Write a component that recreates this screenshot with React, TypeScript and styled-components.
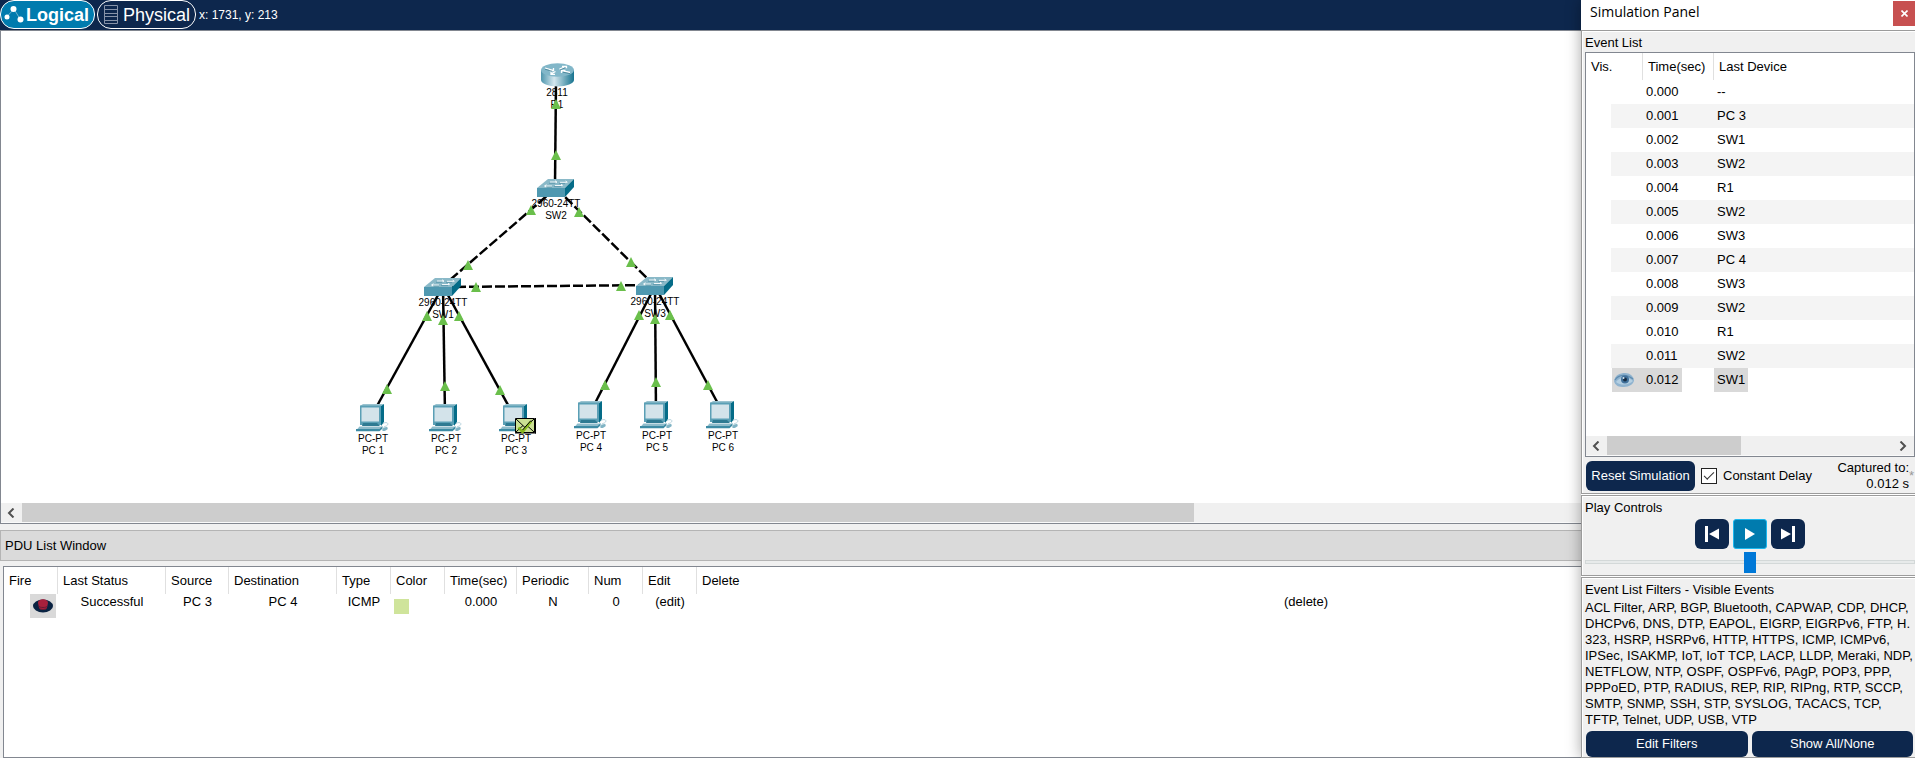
import React from 'react';
import styled, { createGlobalStyle, css } from 'styled-components';

const NAVY = '#0d274d';
const LINE = '#828790';

const GlobalStyle = createGlobalStyle`
  *, *::before, *::after { box-sizing: border-box; }
  body {
    margin: 0;
    background: #f0f0f0;
    color: #000;
    font: 13px/16px "Liberation Sans", Arial, sans-serif;
  }
  button, input { font: inherit; }
  table { border-collapse: separate; border-spacing: 0; }
`;

const Page = styled.div`
  display: grid;
  grid-template-columns: minmax(0, 1fr) 334px;
  min-height: 100vh;
`;

const MainColumn = styled.main`
  display: flex;
  flex-direction: column;
  min-width: 0;
  overflow: hidden;
`;

/* ---------- top bar ---------- */

const TopBar = styled.nav`
  display: flex;
  align-items: flex-start;
  height: 30px;
  background: ${NAVY};
  color: #fff;
`;

const ViewTab = styled.button<{ $active?: boolean; $width: number }>`
  display: flex;
  align-items: center;
  gap: 2px;
  width: ${(p) => p.$width}px;
  height: 29px;
  margin-right: 2px;
  padding: 0 3px;
  border: 1px solid #fff;
  border-radius: 14px;
  background: ${(p) => (p.$active ? '#007bae' : NAVY)};
  color: #fff;
  font-size: 18px;
  line-height: 20px;
  font-weight: ${(p) => (p.$active ? 700 : 400)};
`;

const TabIcon = styled.span`
  display: flex;
  padding: 0 3px;
`;

const Coordinates = styled.span`
  padding-left: 1px;
  font-size: 12px;
  line-height: 30px;
`;

/* ---------- workspace ---------- */

const Workspace = styled.section`
  display: flex;
  flex: 1;
  flex-direction: column;
  border: solid ${LINE};
  border-width: 1px 0 1px 1px;
  background: #fff;
`;

const Topology = styled.svg`
  display: block;
  flex: 1;
  width: 100%;
  min-height: 440px;
  font-size: 10px;
  text-anchor: middle;
`;

const ScrollBar = styled.div`
  display: flex;
  height: 20px;
  border-bottom: 1px solid #fafafa;
  background: #f0f0f0;
`;

const ScrollArrow = styled.button`
  display: grid;
  place-items: center;
  width: 21px;
  padding: 0 2px 0 0;
  border: 0;
  background: none;
`;

const ScrollTrack = styled.div`
  flex: 1;
`;

const ScrollThumb = styled.div<{ $share: string }>`
  width: ${(p) => p.$share};
  height: 100%;
  background: #cdcdcd;
`;

/* ---------- PDU list ---------- */

const DockTitle = styled.h2`
  margin: 6px 0 5px;
  padding: 1px 4px 0;
  border: 1px solid #b4b4b4;
  border-right: 0;
  background: #dadada;
  font-size: 13px;
  font-weight: 400;
  line-height: 28px;
`;

const PduBox = styled.section`
  height: 192px;
  margin-left: 3px;
  border: solid ${LINE};
  border-width: 1px 0 1px 1px;
  background: #fff;
  overflow: hidden;
`;

const headCell = css`
  height: 27px;
  padding: 1px 5px 0;
  border-right: 1px solid #e0e0e0;
  font-weight: 400;
  text-align: left;
  white-space: nowrap;
  &:last-child { border-right: 0; }
`;

/* The last column continues underneath the docked panel. */
const PduTable = styled.table`
  width: calc(100% + 334px);
  table-layout: fixed;
  th { ${headCell} }
  td {
    height: 24px;
    padding: 0;
    text-align: center;
    vertical-align: top;
  }
`;

const FireButton = styled.button`
  display: grid;
  place-items: center;
  width: 26px;
  height: 24px;
  margin-left: auto;
  margin-right: 2px;
  padding: 0;
  border: 0;
  background: #d9d9d9;
`;

const Swatch = styled.div`
  width: 15px;
  height: 15px;
  margin: 5px 3px 0;
  background: #cfe49b;
`;

const CellButton = styled.button`
  padding: 0;
  border: 0;
  background: none;
  color: inherit;
  line-height: 16px;
`;

/* ---------- simulation panel ---------- */

const Panel = styled.aside`
  display: flex;
  flex-direction: column;
  position: relative;
  min-width: 0;
  background: #f0f0f0;
  box-shadow: 0 0 14px rgba(0, 0, 0, 0.35);
`;

const PanelTitle = styled.header`
  display: flex;
  justify-content: space-between;
  height: 30px;
  padding: 1px 0 0 9px;
  background: #fff;
  font: 14px/22px "Open Sans", "Noto Sans", sans-serif;
`;

const CloseButton = styled.button`
  display: grid;
  place-items: center;
  width: 22px;
  height: 25px;
  padding: 0;
  border: 0;
  background: #c75050;
`;

const Group = styled.section<{ $height?: number }>`
  display: flex;
  flex-direction: column;
  flex: ${(p) => (p.$height ? `0 0 ${p.$height}px` : '1')};
  padding: 3px 0 0 3px;
  border: solid #9b9b9b;
  border-width: 1px 0 1px 1px;
  margin-bottom: ${(p) => (p.$height ? 1 : 0)}px;
  box-shadow: inset 1px 1px #fff, 0 1px #fff;
`;

const GroupTitle = styled.h3`
  margin: 0;
  font-size: 13px;
  font-weight: 400;
  line-height: 18px;
`;

const EventBox = styled.div`
  display: flex;
  flex: 1;
  flex-direction: column;
  border: 1px solid ${LINE};
  background: #fff;
`;

const EventRows = styled.div`
  flex: 1;
`;

const EventTable = styled.table`
  width: 100%;
  table-layout: fixed;
  th { ${headCell} }
  td { height: 24px; padding: 0; }
  tbody tr:nth-child(even) td { background: #f4f4f4; }
  tbody tr:nth-child(even) td:first-child {
    background: linear-gradient(to right, #fff 25px, #f4f4f4 25px);
  }
`;

const EventCell = styled.span<{ $selected: boolean }>`
  display: inline-block;
  padding: 0 3px;
  line-height: 24px;
  vertical-align: top;
  background: ${(p) => (p.$selected ? '#d9d9d9' : 'none')};
`;

const VisibleMark = styled.div`
  display: flex;
  align-items: center;
  height: 24px;
  margin-left: 26px;
  padding-left: 2px;
  background: #d9d9d9;
`;

const ResetRow = styled.div`
  display: flex;
  align-items: center;
  height: 36px;
  padding: 1px 0 0 1px;
`;

const DarkButton = styled.button<{ $width?: number; $height: number }>`
  display: grid;
  place-items: center;
  flex: ${(p) => (p.$width ? `0 0 ${p.$width}px` : '1')};
  height: ${(p) => p.$height}px;
  padding: 0;
  border: 0;
  border-radius: 6px;
  background: ${NAVY};
  color: #fff;
`;

const DelayLabel = styled.label`
  display: flex;
  align-items: center;
  gap: 6px;
  margin-left: 6px;
`;

const CheckBox = styled.input`
  display: grid;
  place-items: center;
  appearance: none;
  width: 16px;
  height: 16px;
  margin: 0;
  border: 1px solid #222;
  background: #fff;
  &:checked::before {
    content: "";
    width: 10px;
    height: 5px;
    margin-bottom: 3px;
    border: solid #333;
    border-width: 0 0 1px 1px;
    transform: rotate(-45deg);
  }
`;

const Captured = styled.output`
  margin-left: auto;
  text-align: right;
`;

const Asterisk = styled.span`
  width: 6px;
  color: #999;
`;

const PlayRow = styled.div`
  display: flex;
  justify-content: center;
  gap: 4px;
  margin-top: 2px;
`;

const PlayButton = styled(DarkButton)<{ $active?: boolean }>`
  ${(p) =>
    p.$active &&
    css`
      border: 1px solid #1cb8ee;
      border-radius: 3px;
      background: #007bae;
    `}
`;

const SpeedSlider = styled.input`
  appearance: none;
  width: 100%;
  height: 21px;
  margin: 2px 0 0;
  background: none;
  &::-webkit-slider-runnable-track {
    height: 4px;
    border: 1px solid #d3d8d8;
    background: #e7eaea;
  }
  &::-webkit-slider-thumb {
    appearance: none;
    width: 12px;
    height: 21px;
    margin-top: -9px;
    background: #0078d7;
  }
`;

const FilterText = styled.p`
  margin: 1px 0 3px;
`;

const FilterButtons = styled.div`
  display: flex;
  gap: 4px;
  padding: 0 2px 0 1px;
  margin-top: auto;
`;

/* ---------- data ---------- */

type Point = [number, number];

const links: { from: Point; to: Point; dashed?: boolean }[] = [
  { from: [556, 80], to: [555, 185] },
  { from: [556, 188], to: [443, 286], dashed: true },
  { from: [556, 188], to: [655, 286], dashed: true },
  { from: [443, 287], to: [655, 285], dashed: true },
  { from: [443, 286], to: [372, 415] },
  { from: [443, 286], to: [445, 415] },
  { from: [443, 286], to: [514, 416] },
  { from: [655, 286], to: [590, 413] },
  { from: [655, 286], to: [656, 413] },
  { from: [655, 286], to: [723, 413] },
];

const ports: Point[] = [
  [556, 99], [556, 150], [531, 205], [579, 207], [468, 260], [476, 282],
  [631, 257], [621, 281], [427, 311], [443, 315], [459, 311], [639, 310],
  [655, 314], [670, 310], [387, 384], [445, 381], [500, 385], [605, 380],
  [656, 377], [708, 380],
];

type Device = { kind: 'router' | 'switch' | 'pc'; x: number; y: number; model: string; name: string };

const devices: Device[] = [
  { kind: 'router', x: 541, y: 63, model: '2811', name: 'R1' },
  { kind: 'switch', x: 537, y: 179, model: '2960-24TT', name: 'SW2' },
  { kind: 'switch', x: 424, y: 278, model: '2960-24TT', name: 'SW1' },
  { kind: 'switch', x: 636, y: 277, model: '2960-24TT', name: 'SW3' },
  { kind: 'pc', x: 356, y: 404, model: 'PC-PT', name: 'PC 1' },
  { kind: 'pc', x: 429, y: 404, model: 'PC-PT', name: 'PC 2' },
  { kind: 'pc', x: 499, y: 404, model: 'PC-PT', name: 'PC 3' },
  { kind: 'pc', x: 574, y: 401, model: 'PC-PT', name: 'PC 4' },
  { kind: 'pc', x: 640, y: 401, model: 'PC-PT', name: 'PC 5' },
  { kind: 'pc', x: 706, y: 401, model: 'PC-PT', name: 'PC 6' },
];

const labelAt = { router: [16, 33], switch: [19, 28], pc: [17, 38] };

const pduColumns: [string, number | undefined][] = [
  ['Fire', 54], ['Last Status', 108], ['Source', 63], ['Destination', 108],
  ['Type', 54], ['Color', 54], ['Time(sec)', 72], ['Periodic', 72],
  ['Num', 54], ['Edit', 54], ['Delete', undefined],
];

const eventDevices = ['--', 'PC 3', 'SW1', 'SW2', 'R1', 'SW2', 'SW3', 'PC 4', 'SW3', 'SW2', 'R1', 'SW2', 'SW1'];
const events = eventDevices.map((device, i) => ({ time: (i / 1000).toFixed(3), device }));

/* ---------- drawings ---------- */

const RouterIcon = () => (
  <g>
    <path d="M0 7v10c0 3.500 7.400 6.500 16.500 6.500S33 20.500 33 17V7z" fill="url(#routerSide)" />
    <ellipse cx="16.500" cy="7" rx="16.500" ry="6.800" fill="#82b7c9" />
    <g stroke="#fff" strokeWidth="1.300" fill="none">
      <path d="M4 5l8 2.300M12.500 5v2.500H8.500M29 9.500l-8-1.800M20.500 10V7.500h4" />
      <path d="M18.500 6.200l6-2.700M21 3.300h4.500v2M14.500 8.500l-4.500 2.300M10 8.800v2.500h4" />
    </g>
    <path d="M4 6.200l7 2M19 7l5-2.200M22 9.200l7 1.400" stroke="#3a768a" strokeWidth="0.700" />
  </g>
);

const SwitchIcon = () => (
  <g>
    <path d="M0 9L11 0h26L28 9z" fill="#8ab9c8" />
    <path d="M0 9h28v9H0z" fill="#4f98b0" />
    <path d="M28 9l9-9v8l-9 10z" fill="#056c88" />
    <g stroke="#fff" strokeWidth="0.900" fill="none">
      <path d="M13 3h6M18 1.800l2 1.200-2 1.400M23 3.300h7M28.500 2l2 1.300M8 7h7M9.500 5.700L7.500 7l2 1.200M18 6.500h7M24 5.200l2 1.300" />
    </g>
    <path d="M12 4.300h7M22 4.600h6M9 8.200h6M17 7.600h7" stroke="#45889d" strokeWidth="0.600" />
  </g>
);

const PcIcon = () => (
  <g>
    <path d="M4 2l3-2h21l-3 2z" fill="#9ac3d0" />
    <path d="M25 2l3-2v18l-3 4z" fill="#056c88" />
    <path d="M4 1.500h21V21H4z" fill="#5a9fb5" />
    <path d="M5.500 3.500h17.500v14H5.500z" fill="#d3e3ea" />
    <path d="M7 19h14l3 3H6z" fill="#2f7a92" />
    <path d="M3.500 22.500H26l-2.500 4H0z" fill="#8fbccb" />
    <path d="M0 25h23.500l3-3v2.500l-3 2.700H0z" fill="#3d8ba4" />
    <path d="M27 19.500c3-2 6-.5 4.500 1.500s-3.500 1-4 2.500" fill="none" stroke="#b8d4de" />
    <ellipse cx="29" cy="25" rx="3" ry="1.700" fill="#7fb3c4" transform="rotate(-25 29 25)" />
  </g>
);

const Envelope = () => (
  <g transform="translate(515 418)">
    <path d="M.5.5h19v14H.5z" fill="#cbe094" stroke="#000" />
    <path d="M20.500 0v15.500M0 15h21" stroke="#000" />
    <path d="M1 1l9 8.500L19 1M1 14l7-6.500M19 14l-7-6.500" fill="none" stroke="#000" />
    <path d="M3.500 9.500l4 4.500L16 3.500" fill="none" stroke="#86b81c" strokeWidth="2.500" />
    <path d="M7.500 12L16 2.500" stroke="#000" />
  </g>
);

const icons = { router: RouterIcon, switch: SwitchIcon, pc: PcIcon };

const TopologyDrawing = () => (
  <Topology role="img" aria-label="Network topology">
    <defs>
      <linearGradient id="routerSide">
        <stop offset="0" stopColor="#4e96ad" />
        <stop offset="0.4" stopColor="#d5e7ee" />
        <stop offset="1" stopColor="#16738f" />
      </linearGradient>
    </defs>
    <g transform="translate(-1 -31)">
      {links.map(({ from, to, dashed }, i) => (
        <line
          key={i}
          x1={from[0]}
          y1={from[1]}
          x2={to[0]}
          y2={to[1]}
          stroke="#000"
          strokeWidth="2.500"
          strokeDasharray={dashed ? '10 3' : undefined}
        />
      ))}
      {devices.map((d) => {
        const Icon = icons[d.kind];
        const [dx, dy] = labelAt[d.kind];
        return (
          <g key={d.name} transform={`translate(${d.x} ${d.y})`}>
            <Icon />
            <text x={dx} y={dy}>{d.model}</text>
            <text x={dx} y={dy + 12}>{d.name}</text>
          </g>
        );
      })}
      {ports.map(([x, y], i) => (
        <path key={i} d={`M${x} ${y}l5 10h-10z`} fill="#6abf4b" />
      ))}
      <Envelope />
    </g>
  </Topology>
);

const Chevron = ({ right }: { right?: boolean }) => (
  <svg width="8" height="10" viewBox="0 0 8 10" fill="none" stroke="#505050" strokeWidth="2">
    <path d={right ? 'M1.500 .5L6 5l-4.500 4.500' : 'M6.500 .5L2 5l4.500 4.500'} />
  </svg>
);

const LogicalIcon = () => (
  <svg width="20" height="18" viewBox="0 0 20 18" fill="#fff">
    <path d="M3 10.500L10 3l6 10" stroke="#6db4d0" fill="none" />
    <circle cx="3" cy="11" r="2.500" />
    <circle cx="9.500" cy="3" r="3" />
    <circle cx="16.500" cy="13.500" r="3" />
  </svg>
);

const PhysicalIcon = () => (
  <svg width="14" height="20" viewBox="0 0 14 20" fill="none" stroke="#8793a8">
    <path d="M.5.5h13v18H.5zM0 4.500h14M0 8.500h14M0 11.500h14M0 15.500h14" />
  </svg>
);

const FireIcon = () => (
  <svg width="20" height="14" viewBox="0 0 20 14">
    <ellipse cx="10" cy="7" rx="10" ry="6.500" fill="#0a2342" />
    <path d="M5 4c0-5 10-5 10 0l-1 4.500c0 3-8 3-8 0z" fill="#a8203c" />
    <path d="M5.500 7c1 2 8 2 9 0M6 9c1 2 7 2 8 0" stroke="#651a34" fill="none" />
  </svg>
);

const EyeIcon = () => (
  <svg width="20" height="14" viewBox="0 0 20 14">
    <path d="M0 8C1 2 6 0 11 0s8 3 9 7c0 4-5 7-10 7S1 13 0 8z" fill="#8fb3cf" />
    <path d="M2 9c3-5 12-6 17-1-4 4-12 5-17 1z" fill="#b4cfe2" />
    <path d="M1 7C5 1 13 1 19 6" stroke="#5f8cb0" strokeWidth="1.300" fill="none" />
    <circle cx="11" cy="6.500" r="4" fill="#40709a" />
    <circle cx="11" cy="6.500" r="2" fill="#152c44" />
    <circle cx="9.500" cy="5" r="1" fill="#d6e6f0" />
  </svg>
);

const StepIcon = ({ forward }: { forward?: boolean }) => (
  <svg width="16" height="18" viewBox="0 0 16 18" fill="#fff">
    <path d={forward ? 'M1 3.500v11L11 9zM12 1h3v16h-3z' : 'M15 3.500v11L5 9zM1 1h3v16H1z'} />
  </svg>
);

const PlayIcon = () => (
  <svg width="10" height="12" viewBox="0 0 10 12" fill="#fff">
    <path d="M0 0v12l10-6z" />
  </svg>
);

const CloseIcon = () => (
  <svg width="7" height="7" viewBox="0 0 7 7" stroke="#fff" strokeWidth="1.600">
    <path d="M.5.500l6 6M6.500.500l-6 6" />
  </svg>
);

/* ---------- page ---------- */

export default function App() {
  return (
    <Page>
      <GlobalStyle />
      <MainColumn>
        <TopBar>
          <ViewTab $active $width={95}><LogicalIcon />Logical</ViewTab>
          <ViewTab $width={99}>
            <TabIcon><PhysicalIcon /></TabIcon>Physical
          </ViewTab>
          <Coordinates>x: 1731, y: 213</Coordinates>
        </TopBar>
        <Workspace>
          <TopologyDrawing />
          <ScrollBar>
            <ScrollArrow aria-label="Scroll left"><Chevron /></ScrollArrow>
            <ScrollTrack><ScrollThumb $share="75.2%" /></ScrollTrack>
          </ScrollBar>
        </Workspace>
        <DockTitle>PDU List Window</DockTitle>
        <PduBox>
          <PduTable>
            <colgroup>
              {pduColumns.map(([label, width]) => <col key={label} width={width} />)}
            </colgroup>
            <thead>
              <tr>{pduColumns.map(([label]) => <th key={label}>{label}</th>)}</tr>
            </thead>
            <tbody>
              <tr>
                <td><FireButton aria-label="Fire"><FireIcon /></FireButton></td>
                <td>Successful</td>
                <td>PC 3</td>
                <td>PC 4</td>
                <td>ICMP</td>
                <td><Swatch /></td>
                <td>0.000</td>
                <td>N</td>
                <td>0</td>
                <td><CellButton>(edit)</CellButton></td>
                <td><CellButton>(delete)</CellButton></td>
              </tr>
            </tbody>
          </PduTable>
        </PduBox>
      </MainColumn>

      <Panel>
        <PanelTitle>
          Simulation Panel
          <CloseButton aria-label="Close"><CloseIcon /></CloseButton>
        </PanelTitle>
        <Group $height={464}>
          <GroupTitle>Event List</GroupTitle>
          <EventBox>
            <EventRows>
              <EventTable>
                <colgroup><col width={57} /><col width={71} /><col /></colgroup>
                <thead>
                  <tr><th>Vis.</th><th>Time(sec)</th><th>Last Device</th></tr>
                </thead>
                <tbody>
                  {events.map(({ time, device }, i) => {
                    const selected = i === events.length - 1;
                    return (
                      <tr key={time}>
                        <td>{selected && <VisibleMark><EyeIcon /></VisibleMark>}</td>
                        <td><EventCell $selected={selected}>{time}</EventCell></td>
                        <td><EventCell $selected={selected}>{device}</EventCell></td>
                      </tr>
                    );
                  })}
                </tbody>
              </EventTable>
            </EventRows>
            <ScrollBar>
              <ScrollArrow aria-label="Scroll left"><Chevron /></ScrollArrow>
              <ScrollTrack><ScrollThumb $share="47%" /></ScrollTrack>
              <ScrollArrow aria-label="Scroll right"><Chevron right /></ScrollArrow>
            </ScrollBar>
          </EventBox>
          <ResetRow>
            <DarkButton $width={109} $height={30}>Reset Simulation</DarkButton>
            <DelayLabel>
              <CheckBox type="checkbox" defaultChecked />
              Constant Delay
            </DelayLabel>
            <Captured>Captured to:<br />0.012 s</Captured>
            <Asterisk>*</Asterisk>
          </ResetRow>
        </Group>
        <Group $height={81}>
          <GroupTitle>Play Controls</GroupTitle>
          <PlayRow>
            <PlayButton $width={34} $height={30} aria-label="Step back"><StepIcon /></PlayButton>
            <PlayButton $active $width={34} $height={30} aria-label="Play"><PlayIcon /></PlayButton>
            <PlayButton $width={34} $height={30} aria-label="Step forward"><StepIcon forward /></PlayButton>
          </PlayRow>
          <SpeedSlider type="range" defaultValue={50} aria-label="Play speed" />
        </Group>
        <Group>
          <GroupTitle>Event List Filters - Visible Events</GroupTitle>
          <FilterText>
            ACL Filter, ARP, BGP, Bluetooth, CAPWAP, CDP, DHCP, DHCPv6, DNS, DTP, EAPOL,
            EIGRP, EIGRPv6, FTP, H.<wbr />323, HSRP, HSRPv6, HTTP, HTTPS, ICMP, ICMPv6,
            IPSec, ISAKMP, IoT, IoT TCP, LACP, LLDP, Meraki, NDP, NETFLOW, NTP, OSPF,
            OSPFv6, PAgP, POP3, PPP, PPPoED, PTP, RADIUS, REP, RIP, RIPng, RTP, SCCP,
            SMTP, SNMP, SSH, STP, SYSLOG, TACACS, TCP, TFTP, Telnet, UDP, USB, VTP
          </FilterText>
          <FilterButtons>
            <DarkButton $height={26}>Edit Filters</DarkButton>
            <DarkButton $height={26}>Show All/None</DarkButton>
          </FilterButtons>
        </Group>
      </Panel>
    </Page>
  );
}
